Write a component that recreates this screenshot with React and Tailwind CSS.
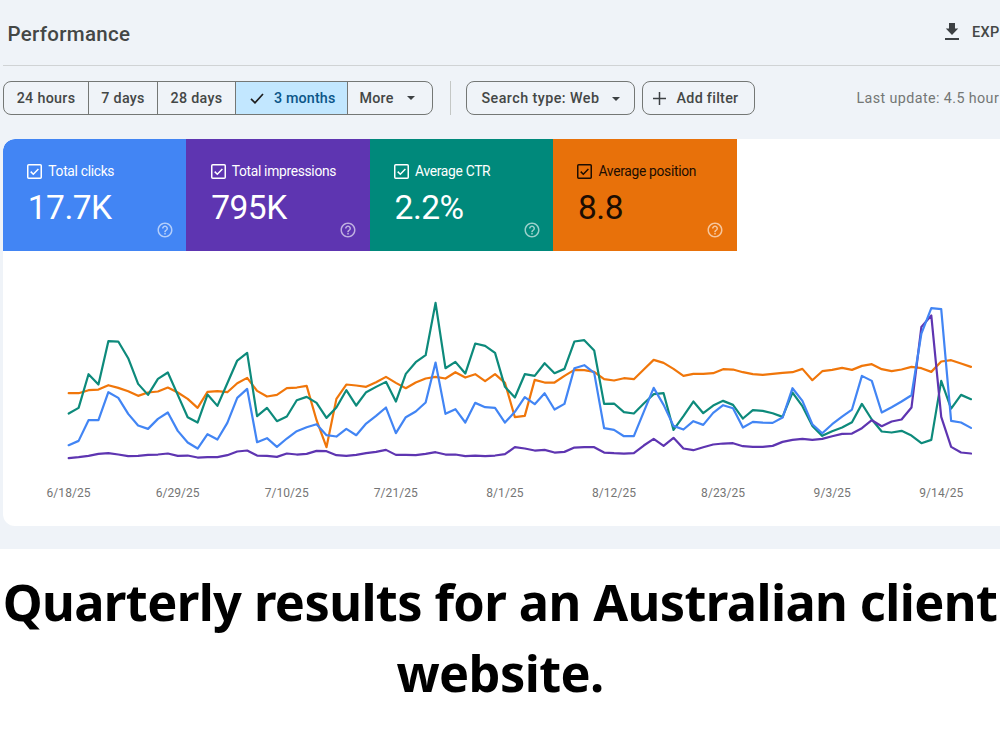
import { MdOutlineHelpOutline } from "react-icons/md";

const ORANGE = [309,309,300,298,285,293,303,317,307,304,292,307,326,353,305,303,306,279,263,302,319,314,294,292,287,390,471,326,283,286,290,276,260,278,294,277,265,260,265,246,262,252,273,252,278,381,377,269,277,277,257,239,240,245,267,271,264,267,238,209,218,236,257,251,251,249,237,238,246,252,254,251,248,246,236,270,243,239,233,239,227,222,237,243,238,230,234,245,214,210,220,230];
const GREEN = [370,353,252,283,153,154,204,281,314,266,247,314,381,397,313,347,279,211,188,378,353,393,379,330,320,338,383,352,300,346,306,290,275,334,251,216,195,38,234,215,250,160,167,188,290,322,252,257,219,249,236,154,150,181,341,340,366,370,340,312,309,419,378,334,369,346,332,344,385,360,362,369,380,307,348,407,437,423,412,396,341,388,424,427,422,436,459,449,272,355,314,327];
const PURPLE = [504,501,497,491,489,493,498,497,494,493,490,497,496,502,501,501,495,484,481,496,497,500,490,493,491,482,483,495,497,494,489,485,479,494,494,495,491,486,493,493,498,496,498,496,492,471,475,481,479,487,485,472,471,471,487,489,490,489,466,446,467,443,475,480,471,463,460,459,468,470,470,467,455,449,446,449,446,438,431,430,414,390,408,394,388,352,110,76,380,470,487,490];
const BLUE = [465,452,390,390,306,323,371,406,416,386,367,422,457,475,432,448,398,323,296,456,444,470,445,423,411,402,435,439,416,435,400,377,352,429,381,364,337,217,371,357,397,338,351,353,397,365,321,342,309,358,341,234,225,248,414,419,438,438,365,293,344,407,418,393,404,368,345,354,412,395,397,398,382,294,332,402,429,402,379,358,257,272,367,351,334,315,130,54,57,392,397,413];

const series = [
    { color: "#f0760a", values: ORANGE },
    { color: "#0d8a7b", values: GREEN },
    { color: "#5e35b1", values: PURPLE },
    { color: "#4285f4", values: BLUE },
];

const dates = ["6/18/25", "6/29/25", "7/10/25", "7/21/25", "8/1/25", "8/12/25", "8/23/25", "9/3/25", "9/14/25"];

const metrics = [
    { label: "Total clicks", value: "17.7K", style: "bg-[#4285f4] text-white rounded-tl-xl" },
    { label: "Total impressions", value: "795K", style: "bg-[#5e35b1] text-white" },
    { label: "Average CTR", value: "2.2%", style: "bg-[#00897b] text-white" },
    { label: "Average position", value: "8.8", style: "bg-[#e8710a] text-[#1c0d02]" },
];

function Caret({ className }) {
    return (
        <svg viewBox="0 0 8 4" className={`w-2 h-1 shrink-0 ${className}`} fill="#3c4043">
            <path d="M0 0h8L4 4z" />
        </svg>
    )
}

function Metric({ label, value, style }) {
    return (
        <div className={`relative h-[112px] w-[183.4px] pl-[24.3px] pt-[22px] ${style}`}>
            <div className="flex items-center h-5 gap-[6px]">
                <svg viewBox="0 0 15 15" className="size-[15px] mt-px" fill="none" stroke="currentColor" strokeWidth="1.5">
                    <rect x="0.75" y="0.75" width="13.5" height="13.5" rx="1" />
                    <path d="M3.7 7.6l2.6 2.6 5.1-5.2" />
                </svg>
                <span className="text-[13.8px] tracking-[-0.3px] whitespace-nowrap">{label}</span>
            </div>
            <div className="text-[33.5px] leading-[40px] tracking-[-0.5px] mt-[7px] pl-[0.5px]">{value}</div>
            <MdOutlineHelpOutline className="absolute right-[12.5px] bottom-[12px] size-[18px] text-white/60" />
        </div>
    )
}

function Chart() {
    return (
        <svg viewBox="0 0 997 210" className="block w-[997px] h-[210px]" fill="none">
            {series.map(({ color, values }) => (
                <polyline
                    key={color}
                    stroke={color}
                    strokeWidth="2.2"
                    strokeLinejoin="round"
                    strokeLinecap="round"
                    points={values.map((v, i) => `${(65.7 + i * 9.915).toFixed(2)},${(v / 3 + 0.2).toFixed(2)}`).join(" ")}
                />
            ))}
        </svg>
    )
}

export default function App() {
    return (
        <div className="w-[1000px] h-[750px] overflow-hidden bg-white font-[Roboto,sans-serif] text-[#444746]">
            <div className="h-[549px] bg-[#eff3f8] overflow-hidden">
                <div className="flex items-center justify-between h-[66px] ml-[3px] border-b border-[#d0d3d5]">
                    <h1 className="pl-[4.5px] pt-[3px] text-[20.5px] font-[480] tracking-[0.3px]">Performance</h1>
                    <div className="flex items-center shrink-0 w-[55px] gap-[13px]">
                        <svg viewBox="0 0 14 17" className="w-[14px] h-[17px] shrink-0 -mt-[2px]" fill="#3c4043">
                            <path d="M4 0h6v5.5h3.2L7 12 .8 5.5H4zM0 15h14v2H0z" />
                        </svg>
                        <span className="text-[14.5px] font-medium tracking-[0.3px]">EXP</span>
                    </div>
                </div>

                <div className="flex items-center h-[34px] mt-[15px] ml-[3px] text-[14.3px] font-[460] whitespace-nowrap *:shrink-0">
                    <div className="flex h-full border border-[#747775] rounded-lg overflow-hidden divide-x divide-[#747775] leading-8 text-center *:shrink-0">
                        <span className="w-[85px] tracking-[0.3px]">24 hours</span>
                        <span className="w-[69px] tracking-[0.3px]">7 days</span>
                        <span className="w-[78px] tracking-[0.3px]">28 days</span>
                        <span className="flex items-center w-[112px] pl-[14px] gap-[10px] bg-[#c2e7ff] text-[#0b5688] tracking-[0.15px]">
                            <svg viewBox="0 0 14 11" className="w-[14px] h-[11px]" fill="none" stroke="#1f1f1f" strokeWidth="1.7">
                                <path d="M1 5.8l4 4L13 1" />
                            </svg>
                            3 months
                        </span>
                        <span className="flex items-center w-[84px] pl-[11.5px] tracking-[0.2px]">More<Caret className="ml-[13px]" /></span>
                    </div>
                    <div className="w-px h-full ml-[17px] bg-[#c4c7c5]" />
                    <div className="flex items-center h-full w-[169px] ml-[14.5px] pl-[15px] border border-[#747775] rounded-lg tracking-[0.45px] pt-px">
                        Search type: Web<Caret className="ml-[13px]" />
                    </div>
                    <div className="flex items-center h-full w-[113px] ml-[7.5px] pl-[9.5px] gap-[11px] border border-[#747775] rounded-lg tracking-[0.3px] pt-px">
                        <svg viewBox="0 0 13 13" className="size-[13px]" stroke="#3c4043" strokeWidth="1.5">
                            <path d="M6.5 0v13M0 6.5h13" />
                        </svg>
                        Add filter
                    </div>
                    <span className="ml-[101.5px] pt-px font-normal text-[#747775] tracking-[0.4px]">Last update: 4.5 hour</span>
                </div>

                <div className="mt-6 ml-[3px] h-[387px] w-[1009px] bg-white rounded-xl overflow-hidden">
                    <div className="flex">
                        {metrics.map((metric) => <Metric key={metric.label} {...metric} />)}
                    </div>
                    <div className="mt-[39px]">
                        <Chart />
                    </div>
                    <div className="flex -mt-[15px] ml-[11px] text-xs text-[#757575]">
                        {dates.map((date) => <span key={date} className="w-[109.1px] shrink-0 text-center tracking-[0.05px]">{date}</span>)}
                    </div>
                </div>
            </div>

            <p className="mt-[17px] text-center font-['Noto_Sans','Open_Sans',sans-serif] font-bold text-[50.5px] tracking-[-0.6px] leading-[71px] text-black whitespace-nowrap">
                Quarterly results for an Australian client<br />website.
            </p>
        </div>
    )
}
